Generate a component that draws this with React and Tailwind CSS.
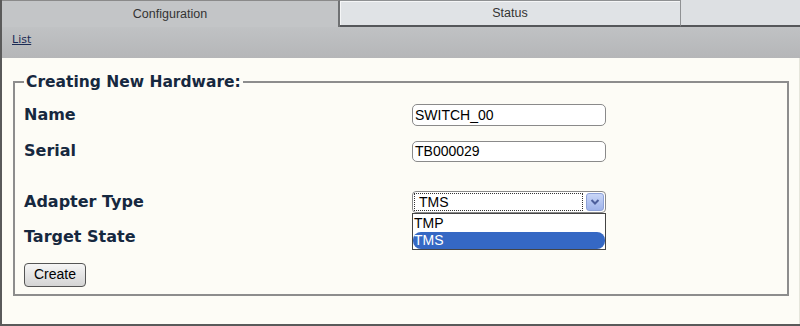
export default function App() {
  const verdana = { fontFamily: '"DejaVu Sans", Verdana, sans-serif' }
  return (
    <div className="w-[800px] h-[326px] flex flex-col bg-[#fdfcf6] border-l-2 border-b-2 border-[#5a5a5a] overflow-hidden" style={{ fontFamily: '"Liberation Sans", Arial, sans-serif' }}>
      {/* ── Tabs ── */}
      <div className="flex h-[27px] shrink-0">
        <div className="w-[338px] bg-[#c3c5c7] border-t border-[#8a8a8a] border-r-2 border-r-[#6f7173] flex items-center justify-center text-[12.5px] text-[#333]">
          Configuration
        </div>
        <div className="w-[341px] bg-[#e0e3e6] border-t border-r border-[#8f9193] border-b-2 border-b-[#55575a] flex items-center justify-center text-[12.5px] text-[#333] shadow-[inset_1px_1px_0_#f5f6f7]">
          Status
        </div>
        <div className="flex-1 bg-[#dde0e3] border-b-2 border-[#55575a]" />
      </div>

      {/* ── Toolbar ── */}
      <div className="h-[31px] shrink-0 bg-gradient-to-b from-[#c0c2c4] to-[#b5b6b8] flex items-center pl-[10px] pb-[5px]">
        <a href="#" className="text-[11px] text-[#1b2b55] underline" style={verdana}>List</a>
      </div>

      {/* ── Form ── */}
      <div className="flex-1 pl-[11px] pr-[10px] pt-[15px] border-r border-[#e6e6dc]">
        <fieldset className="relative border-2 border-[#8d8d8d] pl-[9px] pb-[7px] pt-[4px]">
          <legend className="px-[2px] text-[15.5px] font-bold text-[#16283f] leading-[18px]" style={verdana}>
            Creating New Hardware:
          </legend>

          <div className="flex items-center h-[22px] mt-[9px]">
            <span className="w-[388px] text-[16px] font-bold text-[#16283f]" style={verdana}>Name</span>
            <div className="w-[194px] h-[22px] bg-white border border-[#8a8a8a] rounded-[5px] flex items-center pl-[2px] text-[14px] text-black">SWITCH_00</div>
          </div>

          <div className="flex items-center h-[22px] mt-[14px]">
            <span className="w-[388px] text-[16px] font-bold text-[#16283f]" style={verdana}>Serial</span>
            <div className="w-[194px] h-[21px] bg-white border border-[#8a8a8a] rounded-[5px] flex items-center pl-[2px] text-[14px] text-black">TB000029</div>
          </div>

          <div className="flex items-center h-[22px] mt-[29px]">
            <span className="w-[388px] text-[16px] font-bold text-[#16283f]" style={verdana}>Adapter Type</span>
            <div className="relative w-[194px] h-[22px] bg-white border border-[#8a8a8a] rounded-[4px] flex items-center p-[1px]">
              <div className="flex-1 h-full border border-dotted border-[#333] flex items-center pl-[4px] text-[14px] text-black">TMS</div>
              <div className="w-[18px] h-[18px] ml-[3px] rounded-[3px] bg-gradient-to-b from-[#c9d6f7] to-[#9fb3ea] border border-[#8ea2d8] flex items-center justify-center">
                <svg width="10" height="8" viewBox="0 0 10 8">
                  <path d="M1.5 2 L5 5.5 L8.5 2" fill="none" stroke="#4d5f9c" strokeWidth="2" />
                </svg>
              </div>
              <div className="absolute left-[-1px] top-[21px] w-[194px] h-[37px] bg-white border border-[#444] flex flex-col text-[14px] leading-[17px] z-10">
                <div className="pl-[1px] pt-[1px] h-[18px] text-black">TMP</div>
                <div className="h-[17px] bg-[#3568c4] text-white rounded-[8px] pl-[1px]">TMS</div>
              </div>
            </div>
          </div>

          <div className="flex items-center h-[22px] mt-[13px]">
            <span className="w-[388px] text-[16px] font-bold text-[#16283f]" style={verdana}>Target State</span>
          </div>

          <div className="mt-[14px]">
            <button className="w-[62px] h-[24px] rounded-[4px] border border-[#555] bg-gradient-to-b from-[#f6f6f6] to-[#d4d4d4] text-[14px] text-black">
              Create
            </button>
          </div>
        </fieldset>
      </div>
    </div>
  )
}
